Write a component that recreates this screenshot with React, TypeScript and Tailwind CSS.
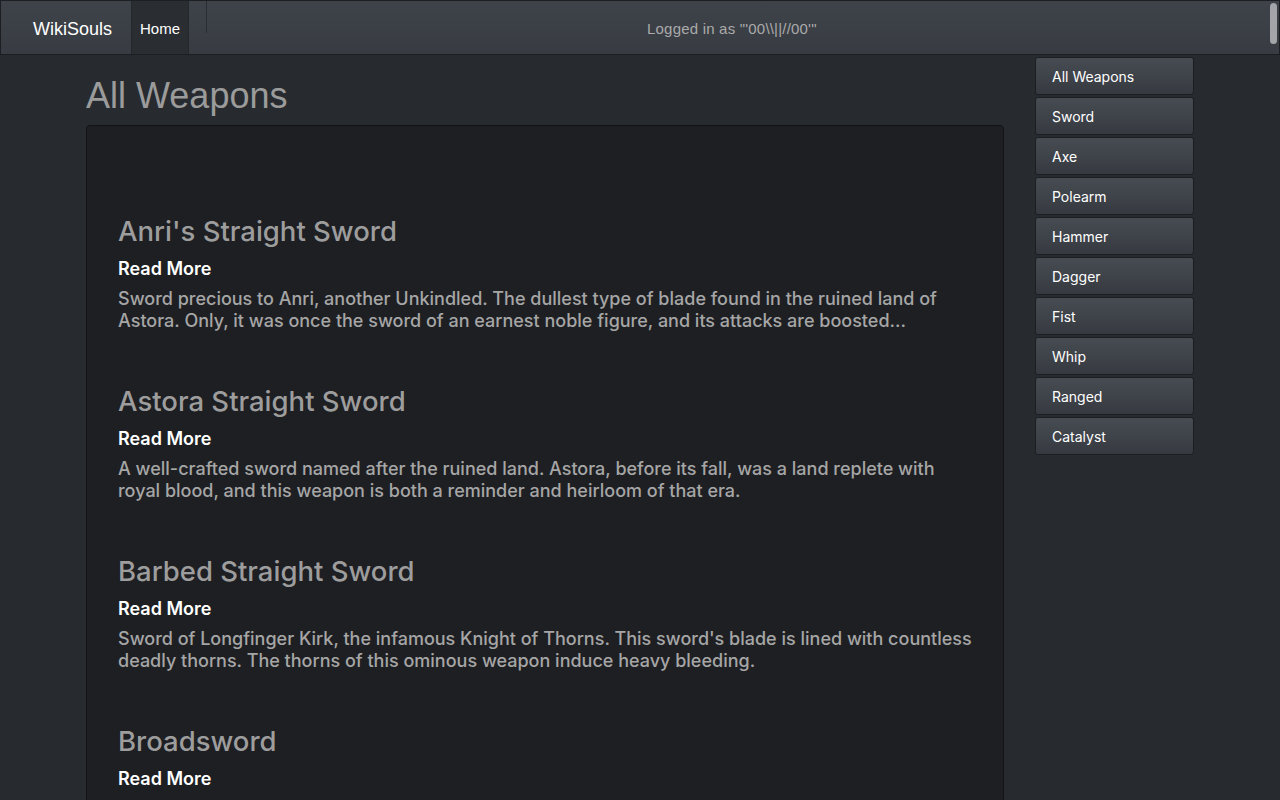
import React from 'react';

type Weapon = { name: string; desc: string };

const weapons: Weapon[] = [
  {
    name: "Anri's Straight Sword",
    desc: 'Sword precious to Anri, another Unkindled. The dullest type of blade found in the ruined land of Astora. Only, it was once the sword of an earnest noble figure, and its attacks are boosted...',
  },
  {
    name: 'Astora Straight Sword',
    desc: 'A well-crafted sword named after the ruined land. Astora, before its fall, was a land replete with royal blood, and this weapon is both a reminder and heirloom of that era.',
  },
  {
    name: 'Barbed Straight Sword',
    desc: "Sword of Longfinger Kirk, the infamous Knight of Thorns. This sword's blade is lined with countless deadly thorns. The thorns of this ominous weapon induce heavy bleeding.",
  },
  {
    name: 'Broadsword',
    desc: 'Standard sword with a wide blade, which is heavier than a regular straight sword but deals more damage with each blow.',
  },
];

const categories = ['All Weapons', 'Sword', 'Axe', 'Polearm', 'Hammer', 'Dagger', 'Fist', 'Whip', 'Ranged', 'Catalyst'];

export default function App() {
  return (
    <div className="relative h-[800px] overflow-hidden bg-[#272b30] font-['Liberation_Sans',Arial,sans-serif]">
      {/* Navbar */}
      <nav className="flex h-[55px] items-stretch border border-[#1c1e22] bg-gradient-to-b from-[#3e434a] to-[#383c42]">
        <div className="flex items-center pt-[3px] pl-[32px] pr-[19px] text-[18px] text-white">WikiSouls</div>
        <div className="flex items-center border-x border-[#24272b] bg-[#2a2d32] px-[8px] pt-[3px] text-[15px] text-white">Home</div>
        <div className="ml-[17px] h-[32px] w-px bg-[#2a2d31]" />
        <div className="ml-[440px] flex items-center pt-[3px] text-[15px] tracking-[0.2px] text-[#aaaaaa]">Logged in as "'00\\||//00'"</div>
      </nav>

      <div className="flex items-start pl-[86px]">
        {/* Main column */}
        <div className="w-[918px]">
          <h1 className="mt-[21px] mb-[9px] text-[36px] leading-[40px] text-[#9b9b9b]">All Weapons</h1>
          <div className="rounded-[4px] border border-[#121315] bg-[#1e1f23] px-[31px] pt-[89px] font-['Inter',sans-serif]">
            {weapons.map(w => (
              <div key={w.name} className="mb-[53px]">
                <h2 className="text-[27.5px] font-medium leading-[33px] text-[#9d9d9d]">{w.name}</h2>
                <a className="mt-[10px] block text-[18px] font-semibold leading-[22px] text-white">Read More</a>
                <p className="mt-[8px] text-[18px] font-medium leading-[22px] text-[#a6a6a6]">{w.desc}</p>
              </div>
            ))}
          </div>
        </div>

        {/* Sidebar */}
        <div className="ml-[31px] mt-[2px] w-[159px] font-['Inter',sans-serif]">
          {categories.map(c => (
            <div
              key={c}
              className="mb-[2px] flex h-[38px] items-center rounded-[3px] border border-[#1c1e22] bg-gradient-to-b from-[#474c53] to-[#363a40] pl-[16px] text-[14px] text-white"
            >
              {c}
            </div>
          ))}
        </div>
      </div>

      {/* overlay scrollbar thumb */}
      <div className="absolute right-[3px] top-[3px] h-[41px] w-[7px] rounded-full bg-[#a3a5a8]" />
    </div>
  );
}
